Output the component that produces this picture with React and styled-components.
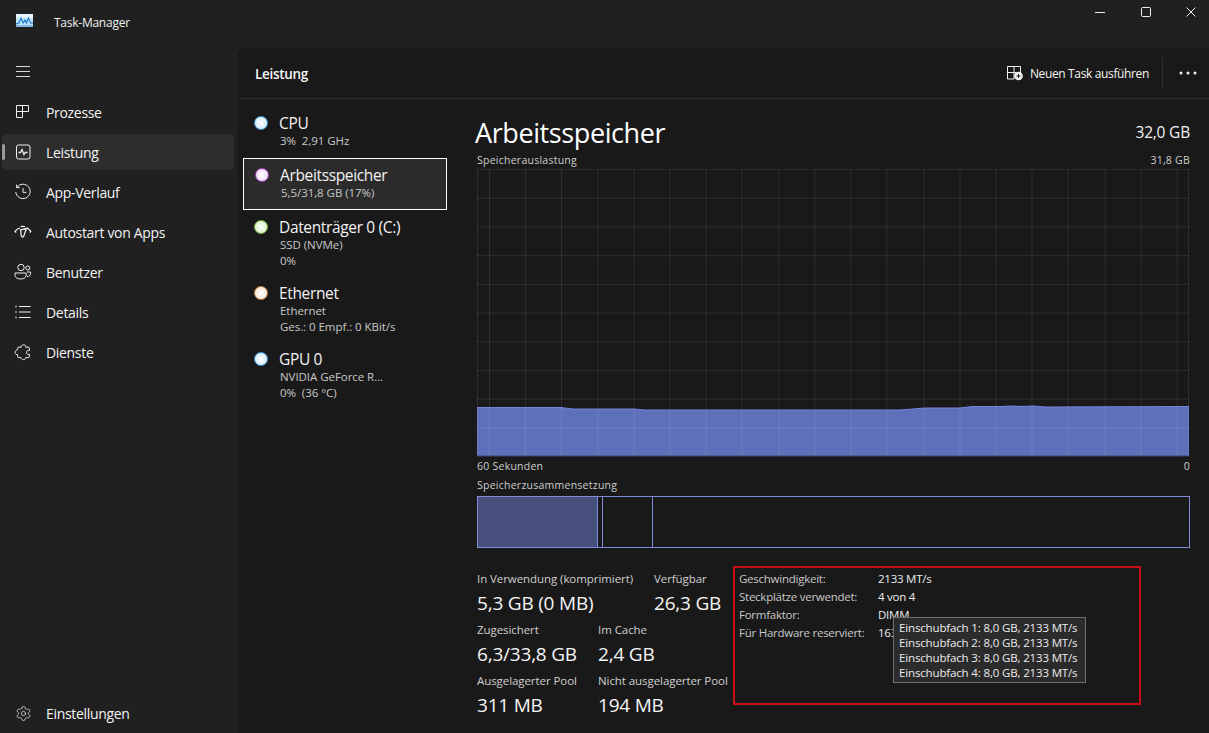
import React from "react";
import styled, { createGlobalStyle } from "styled-components";
import { Settings } from "lucide-react";

const Global = createGlobalStyle`
  html, body { margin: 0; padding: 0; background: #202020; }
  * { box-sizing: border-box; }
  #root { width: 1209px; height: 733px; overflow: hidden; }
`;

const FONT = `"Open Sans", "Noto Sans", "Liberation Sans", sans-serif`;

const Window = styled.div`
  width: 1209px; height: 733px; background: #202020; color: #fff;
  font-family: ${FONT}; display: flex; flex-direction: column;
  overflow: hidden; letter-spacing: -0.35px;
`;
const TitleBar = styled.header`
  height: 48px; flex: none; display: flex; align-items: flex-start;
`;
const AppIcon = styled.svg`
  width: 17px; height: 13px; margin: 14px 0 0 16px; flex: none;
`;
const AppTitle = styled.span`
  font-size: 12px; line-height: 16px; margin: 15px 0 0 21px; color: #f0f0f0; letter-spacing: -0.25px;
`;
const WinControls = styled.div`
  margin-left: auto; margin-right: -5px; display: flex;
`;
const WinButton = styled.div`
  width: 45.5px; height: 23px; display: flex; align-items: center; justify-content: center;
`;
const Body = styled.div`
  flex: 1; display: flex; min-height: 0;
`;
const Sidebar = styled.nav`
  width: 238px; flex: none; display: flex; flex-direction: column; padding: 4px 4px 0 2px;
`;
const MenuButton = styled.div`
  height: 40px; padding-left: 13px; display: flex; align-items: center;
`;
const NavList = styled.div`
  display: flex; flex-direction: column; gap: 4px; margin-top: 2px;
`;
const NavItem = styled.div`
  position: relative; height: 36px; display: flex; align-items: center; border-radius: 4px;
  background: ${p => (p.$active ? "#2d2d2d" : "transparent")};
  padding-left: 12px; font-size: 14px; color: #f3f3f3; letter-spacing: -0.32px;
  ${p => p.$active && `&::before { content: ""; position: absolute; left: 0; top: 10px; width: 3px; height: 16px; border-radius: 2px; background: #9a9a9a; }`}
`;
const NavIcon = styled.span`
  width: 18px; height: 18px; display: flex; align-items: center; justify-content: center;
  margin-right: 14px; flex: none; color: #f0f0f0;
`;
const SidebarFoot = styled.div`
  margin-top: auto; margin-bottom: 2px;
`;
const Panel = styled.main`
  flex: 1; min-width: 0; background: #191919; border-top-left-radius: 8px;
  display: flex; flex-direction: column;
`;
const PanelHeader = styled.div`
  height: 51px; flex: none; border-bottom: 1px solid #2e2e2e; display: flex; align-items: center;
  padding: 0 0 0 17px;
`;
const PanelTitle = styled.h1`
  font-size: 13.5px; font-weight: 600; margin: 2px 0 0; color: #f5f5f5; letter-spacing: -0.3px;
`;
const HeaderActions = styled.div`
  margin-left: auto; display: flex; align-items: center; height: 100%;
`;
const TaskButton = styled.div`
  display: flex; align-items: center; gap: 7px; font-size: 12px; color: #f3f3f3; padding-right: 13px;
  letter-spacing: -0.36px;
`;
const Divider = styled.div`
  width: 1px; height: 32px; background: #2f2f2f;
`;
const MoreDots = styled.svg`
  width: 18px; height: 4px; margin: 0 12px 0 16px;
`;
const Columns = styled.div`
  flex: 1; display: flex; min-height: 0;
`;
const DeviceList = styled.div`
  width: 239px; flex: none; padding: 7px 0 0 5px; display: flex; flex-direction: column;
`;
const Device = styled.div`
  width: 204px; min-height: 52px; padding: 7px 0 7px ${p => (p.$selected ? 12 : 11)}px;
  display: flex; align-items: flex-start;
  background: ${p => (p.$selected ? "#2b2b2b" : "transparent")};
  outline: ${p => (p.$selected ? "1.5px solid #fff" : "none")};
  outline-offset: -1px;
`;
const Dot = styled.span`
  width: 14px; height: 14px; border-radius: 50%; flex: none; margin: 3px 11px 0 0;
  background: radial-gradient(circle at 50% 50%, #ffffff 0%, ${p => p.$tint} 70%);
  border: 1.5px solid ${p => p.$ring};
`;
const DeviceText = styled.div`
  display: flex; flex-direction: column; min-width: 0;
`;
const DeviceName = styled.div`
  font-size: 15.5px; line-height: 20px; color: #f2f2f2; white-space: nowrap; letter-spacing: -0.35px;
`;
const DeviceSub = styled.div`
  font-size: 11.5px; line-height: 16px; color: #c8c8c8; white-space: nowrap; letter-spacing: -0.05px; padding-left: 1px;
`;
const Detail = styled.section`
  width: 713px; flex: none; display: flex; flex-direction: column; padding-top: 16px;
`;
const TitleRow = styled.div`
  height: 34px; display: flex; align-items: center; justify-content: space-between; margin-left: -2px; margin-bottom: 3px;
`;
const BigTitle = styled.h2`
  font-size: 27px; font-weight: 400; margin: 0; color: #fff; letter-spacing: -0.4px;
`;
const Capacity = styled.span`
  font-size: 15.5px; color: #f0f0f0; letter-spacing: -0.2px;
`;
const SmallRow = styled.div`
  height: 16px; line-height: 16px; font-size: 10.5px; color: #cdcdcd; display: flex; justify-content: space-between;
  letter-spacing: 0.25px;
  margin-top: ${p => p.$top || 0}px;
`;
const ChartSvg = styled.svg`
  display: block; width: 713px; height: 288px; margin-top: 1px; flex: none;
`;
const CompBar = styled.svg`
  display: block; width: 713px; height: 52px; margin-top: 3px; flex: none;
`;
const Bottom = styled.div`
  display: flex; align-items: flex-start; margin-top: 18px;
`;
const Stats = styled.div`
  width: 256px; flex: none; padding-top: 5px; display: flex; flex-direction: column; gap: 3px;
`;
const StatRow = styled.div`
  display: grid; grid-template-columns: ${p => p.$first}px auto;
`;
const Stat = styled.div`
  display: flex; flex-direction: column; white-space: nowrap;
`;
const StatLabel = styled.span`
  font-size: 11.5px; line-height: 16px; color: #cfcfcf; letter-spacing: -0.07px;
`;
const StatValue = styled.span`
  font-size: 19px; line-height: 32px; color: #f5f5f5; letter-spacing: -0.2px;
`;
const SpecBox = styled.div`
  position: relative; width: 408px; height: 139px; border: 2px solid #c80f17; padding: 2px 0 0 4px;
`;
const SpecRow = styled.div`
  display: grid; grid-template-columns: 139px auto; height: 18px; line-height: 18px;
  font-size: 11.5px; letter-spacing: -0.25px;
`;
const SpecKey = styled.span`
  color: #c8c8c8; white-space: nowrap;
`;
const SpecVal = styled.span`
  color: #ededed; white-space: nowrap;
`;
const Tip = styled.div`
  position: absolute; left: 158px; top: 49px; width: 193px; height: 66px;
  background: #2b2b2b; border: 1px solid #6e6e6e; padding: 2px 0 0 5px;
  font-size: 11.5px; line-height: 15px; color: #ececec; letter-spacing: -0.15px; white-space: nowrap;
`;

const Svg = ({ children, size = 18 }) => (
  <svg width={size} height={size} viewBox="0 0 18 18" fill="none" stroke="currentColor" strokeWidth="1">{children}</svg>
);

const IconMenu = () => (
  <svg width="16" height="12" viewBox="0 0 16 12" stroke="#d8d8d8" strokeWidth="1"><path d="M1 .5h14M1 5.5h14M1 10.500h14" /></svg>
);
const IconProcess = () => <Svg><path d="M2.500 2.500h12v6h-12zM8.500 2.500v12h-6v-6" /></Svg>;
const IconPerf = () => (
  <Svg><rect x="2.500" y="2" width="13.500" height="14" rx="2" /><path d="M4.500 9.500h2l1.500-3 2 5 1.200-2h2.300" strokeWidth="1.300" /></Svg>
);
const IconHistory = () => (
  <Svg><path d="M3 4.400A7.200 7.200 0 1 1 1.800 9" /><path d="M2.600 1.600v3h3" /><path d="M9 5v4.400h3.400" /></Svg>
);
const IconStartup = () => (
  <Svg>
    <path d="M2.200 9.600 1 8.400A9 9 0 0 1 6 5" strokeWidth="1.200" />
    <path d="M6.500 3.600a9 9 0 0 1 4.500 0" strokeWidth="1.200" />
    <path d="M13 4.800 16.800 8.400 15.800 9.600" strokeWidth="1.200" />
    <path d="M6.600 6.800 12.400 5.400 9.600 13.400a1.300 1.300 0 0 1-2.400-.8z" strokeWidth="1.300" />
  </Svg>
);
const IconUsers = () => (
  <Svg>
    <circle cx="7" cy="4.500" r="3.200" /><circle cx="13.800" cy="5" r="2" />
    <path d="M1 10h11.200v2.400c0 2-2.400 3.600-5.600 3.600S1 14.400 1 12.400z" />
    <path d="M13 9h3.600v1.500c0 1.800-1.600 3-3.600 3" />
  </Svg>
);
const IconList = () => (
  <Svg>
    <path d="M5 3.500h11.500M5 9h11.500M5 14.500h11.500" />
    <path d="M1.400 3.500h1.200M1.400 9h1.200M1.400 14.500h1.200" strokeWidth="1.400" />
  </Svg>
);
const IconService = () => (
  <Svg>
    <path d="M9.600 1.800c1.400 0 2.400 1 2.200 2.400h2.600c.6 0 1 .4 1 1v2.400c-1.800-.6-3 .4-3 1.800s1.200 2.400 3 1.800v2.400c0 .6-.4 1-1 1h-2.600c-.2 1.200-1 2-2.400 2-1.200 0-2.200-.8-2.400-2H4.600c-.6 0-1-.4-1-1v-2.200C2 11.800 1.200 10.800 1.200 9.500S2 7 3.600 6.800V5.200c0-.6.400-1 1-1h2.600c-.2-1.400.9-2.400 2.400-2.400z" />
  </Svg>
);
const IconNewTask = () => (
  <svg width="16" height="16" viewBox="0 0 16 16" fill="none">
    <path d="M.5 1.500h13v6.500M7 1.500v12.500H.5V1.500M.5 7.500h9" stroke="#f0f0f0" />
    <circle cx="11.500" cy="11" r="4.300" fill="#f4f4f4" />
    <path d="M9.400 11h4.200M11.500 8.900v4.200" stroke="#191919" />
  </svg>
);

const nav = [
  ["Prozesse", IconProcess],
  ["Leistung", IconPerf, true],
  ["App-Verlauf", IconHistory],
  ["Autostart von Apps", IconStartup],
  ["Benutzer", IconUsers],
  ["Details", IconList],
  ["Dienste", IconService],
];

const devices = [
  { name: "CPU", sub: ["3%\u00a0 2,91 GHz"], tint: "#d8ecfa", ring: "#3c9ad8" },
  { name: "Arbeitsspeicher", sub: ["5,5/31,8 GB (17%)"], tint: "#f2dcf6", ring: "#a53cc4", selected: true },
  { name: "Datenträger 0 (C:)", sub: ["SSD (NVMe)", "0%"], tint: "#dcf3c8", ring: "#73b545" },
  { name: "Ethernet", sub: ["Ethernet", "Ges.: 0 Empf.: 0 KBit/s"], tint: "#fbe8d6", ring: "#c9803e" },
  { name: "GPU 0", sub: ["NVIDIA GeForce R...", "0%\u00a0 (36 °C)"], tint: "#d8ecfa", ring: "#3c9ad8" },
];

const gridX = [12.5, 48.5, 84.5, 121, 157, 193, 229, 265, 302, 338, 374, 410, 447, 483, 519, 555, 591, 628, 664, 700];
const gridY = Array.from({ length: 10 }, (_, i) => 0.5 + i * 28.7);
const line =
  "M0 238.500 L84 238.500 L96 240 L157 240 L168 241 L423 241 L436 240 L447 239 L483 239 L495 237.500 L526 237.500 L533 237 L543 237.500 L556 237 L568 238 L712 237.500";

const Chart = () => (
  <ChartSvg viewBox="0 0 713 288">
    <path d={`${line} L712 287 L0 287 Z`} fill="#5f70bb" />
    <g stroke="#ffffff" strokeOpacity="0.09" strokeWidth="1">
      {gridX.map(x => <line key={x} x1={x} x2={x} y1="0" y2="287" />)}
      {gridY.map(y => <line key={y} x1="0" x2="712" y1={y} y2={y} />)}
      <line x1="0.5" x2="0.5" y1="0" y2="287" />
      <line x1="711.5" x2="711.5" y1="0" y2="287" />
    </g>
    <path d={line} fill="none" stroke="#7684dc" strokeWidth="1.200" />
    <line x1="0" x2="712" y1="287" y2="287" stroke="#3f4670" />
  </ChartSvg>
);

const Composition = () => (
  <CompBar viewBox="0 0 713 52">
    <rect x="0.5" y="0.5" width="120" height="51" fill="#474f7c" />
    <rect x="0.5" y="0.5" width="712" height="51" fill="none" stroke="#7f8bd8" />
    <path d="M120.500 0v52M125.500 0v52M175.500 0v52" stroke="#7f8bd8" />
  </CompBar>
);

const stats = [
  [177, ["In Verwendung (komprimiert)", "5,3 GB (0 MB)"], ["Verfügbar", "26,3 GB"]],
  [121, ["Zugesichert", "6,3/33,8 GB"], ["Im Cache", "2,4 GB"]],
  [121, ["Ausgelagerter Pool", "311 MB"], ["Nicht ausgelagerter Pool", "194 MB"]],
];

const specs = [
  ["Geschwindigkeit:", "2133 MT/s"],
  ["Steckplätze verwendet:", "4 von 4"],
  ["Formfaktor:", "DIMM"],
  ["Für Hardware reserviert:", "163 MB"],
];

export default function App() {
  return (
    <Window>
      <Global />
      <TitleBar>
        <AppIcon viewBox="0 0 17 13">
          <rect width="17" height="13" fill="#bfe3f7" />
          <rect width="17" height="4" fill="#e8f4fb" />
          <path d="M0 10 3 9 5 4 7 9 9 6 10.500 9 12.500 4 14.500 9 17 9" fill="none" stroke="#1f7fd0" strokeWidth="1.200" />
          <rect y="11" width="17" height="2" fill="#7fb8e0" />
        </AppIcon>
        <AppTitle>Task-Manager</AppTitle>
        <WinControls>
          <WinButton><svg width="10" height="10" viewBox="0 0 10 10"><path d="M0 5.500h10" stroke="#eee" /></svg></WinButton>
          <WinButton><svg width="10" height="10" viewBox="0 0 10 10"><rect x=".5" y=".5" width="9" height="9" rx="1" fill="none" stroke="#eee" /></svg></WinButton>
          <WinButton><svg width="10" height="10" viewBox="0 0 10 10"><path d="M.5.500l9 9M9.500.500l-9 9" stroke="#eee" /></svg></WinButton>
        </WinControls>
      </TitleBar>
      <Body>
        <Sidebar>
          <MenuButton><IconMenu /></MenuButton>
          <NavList>
            {nav.map(([label, Icon, active]) => (
              <NavItem key={label} $active={active}>
                <NavIcon><Icon /></NavIcon>
                {label}
              </NavItem>
            ))}
          </NavList>
          <SidebarFoot>
            <NavItem>
              <NavIcon><Settings size={17} strokeWidth={1} /></NavIcon>
              Einstellungen
            </NavItem>
          </SidebarFoot>
        </Sidebar>
        <Panel>
          <PanelHeader>
            <PanelTitle>Leistung</PanelTitle>
            <HeaderActions>
              <TaskButton><IconNewTask />Neuen Task ausführen</TaskButton>
              <Divider />
              <MoreDots viewBox="0 0 18 4"><g fill="#f2f2f2"><circle cx="2" cy="2" r="1.500" /><circle cx="9" cy="2" r="1.500" /><circle cx="16" cy="2" r="1.500" /></g></MoreDots>
            </HeaderActions>
          </PanelHeader>
          <Columns>
            <DeviceList>
              {devices.map(d => (
                <Device key={d.name} $selected={d.selected}>
                  <Dot $tint={d.tint} $ring={d.ring} />
                  <DeviceText>
                    <DeviceName>{d.name}</DeviceName>
                    {d.sub.map(s => <DeviceSub key={s}>{s}</DeviceSub>)}
                  </DeviceText>
                </Device>
              ))}
            </DeviceList>
            <Detail>
              <TitleRow>
                <BigTitle>Arbeitsspeicher</BigTitle>
                <Capacity>32,0 GB</Capacity>
              </TitleRow>
              <SmallRow><span>Speicherauslastung</span><span>31,8 GB</span></SmallRow>
              <Chart />
              <SmallRow $top={1}><span>60 Sekunden</span><span>0</span></SmallRow>
              <SmallRow $top={3}><span>Speicherzusammensetzung</span></SmallRow>
              <Composition />
              <Bottom>
                <Stats>
                  {stats.map(([first, a, b]) => (
                    <StatRow key={a[0]} $first={first}>
                      <Stat><StatLabel>{a[0]}</StatLabel><StatValue>{a[1]}</StatValue></Stat>
                      <Stat><StatLabel>{b[0]}</StatLabel><StatValue>{b[1]}</StatValue></Stat>
                    </StatRow>
                  ))}
                </Stats>
                <SpecBox>
                  {specs.map(([k, v]) => (
                    <SpecRow key={k}><SpecKey>{k}</SpecKey><SpecVal>{v}</SpecVal></SpecRow>
                  ))}
                  <Tip>
                    <div>Einschubfach 1: 8,0 GB, 2133 MT/s</div>
                    <div>Einschubfach 2: 8,0 GB, 2133 MT/s</div>
                    <div>Einschubfach 3: 8,0 GB, 2133 MT/s</div>
                    <div>Einschubfach 4: 8,0 GB, 2133 MT/s</div>
                  </Tip>
                </SpecBox>
              </Bottom>
            </Detail>
          </Columns>
        </Panel>
      </Body>
    </Window>
  );
}
